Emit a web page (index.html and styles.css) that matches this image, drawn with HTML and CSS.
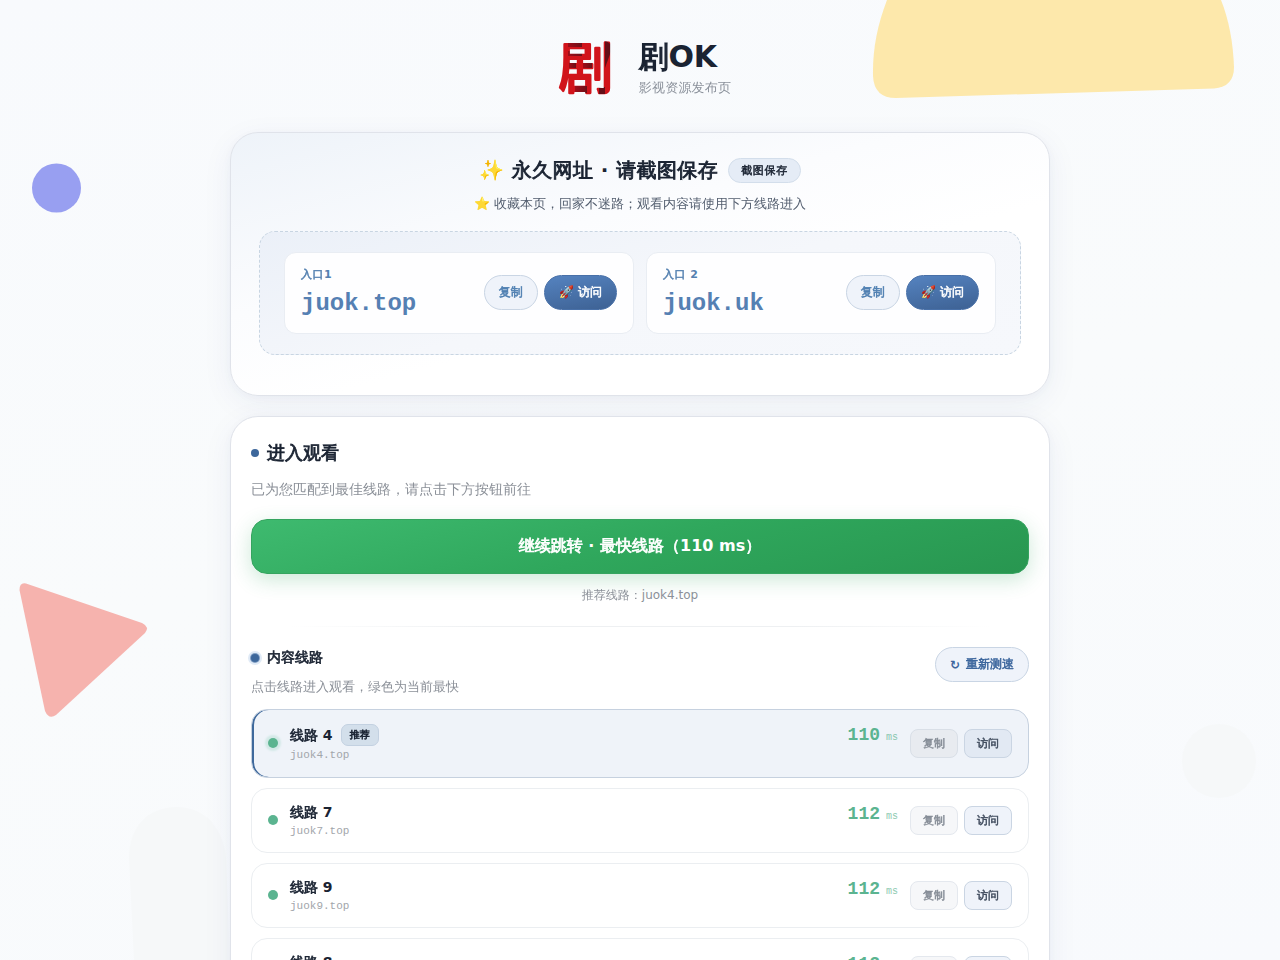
FILE: index.html
```html
<!DOCTYPE html>
<html lang="zh-CN">
<head>
<meta charset="utf-8">
<title>剧OK</title>
<link rel="stylesheet" href="styles.css">
</head>
<body>
<svg class="shapes" viewBox="0 0 1280 960" aria-hidden="true">
  <path fill="#fde8ab" d="M887 0C877 26 872.500 50 873 76Q874 98 896 98L1214 88.500Q1234 87 1234 67C1233 42 1229 20 1221 0Z"/>
  <circle cx="56.500" cy="188" r="24.500" fill="#989ff1"/>
  <path fill="#f6b3ae" d="M26 583.500L142 623Q150 627 145 633L56 715Q49 720 45 711L19.500 590Q19.500 582 26 583.500Z"/>
  <path fill="#f6f8f9" d="M134 960L129 858C129 828 147 807 177 807C207 807 224 832 226 858L230 960Z"/>
  <circle cx="1219" cy="761" r="37" fill="#f6f8f9"/>
</svg>
<main class="page">
  <header class="brand">
    <svg class="logo" viewBox="0 0 72 72" aria-hidden="true">
      <defs>
        <linearGradient id="dark" x1="0" x2="1" y1="0" y2="0"><stop offset="0" stop-color="#a00d19"/><stop offset="1" stop-color="#6c1018"/></linearGradient>
        <pattern id="ink" width="72" height="72" patternUnits="userSpaceOnUse">
          <rect width="72" height="72" fill="#d1141b"/>
          <rect x="19" y="9" width="14" height="6" fill="url(#dark)"/>
          <rect x="19" y="19" width="14" height="5" fill="url(#dark)"/>
          <rect x="20" y="30" width="7" height="6" fill="url(#dark)"/>
          <rect x="34" y="30" width="9" height="6" fill="url(#dark)"/>
          <rect x="26" y="54" width="12" height="7" fill="url(#dark)"/>
          <path d="M56 8L64 14L56 36Z" fill="#650e17"/>
          <rect x="50" y="55" width="6" height="7" fill="#650e17"/>
        </pattern>
      </defs>
      <text class="logo-text" x="9.500" y="56">剧</text>
    </svg>
    <div>
      <h1 class="brand-name strong">剧<span class="latin">OK</span></h1>
      <p class="brand-sub">影视资源发布页</p>
    </div>
  </header>

  <section class="card hero">
    <div class="hero-head"><h2 class="hero-title strong">✨ 永久网址<span class="latin"> · </span>请截图保存</h2><span class="pill strong">截图保存</span></div>
    <p class="hero-sub">⭐ 收藏本页，回家不迷路；观看内容请使用下方线路进入</p>
    <div class="entries">
      <div class="entry">
        <div><div class="entry-label strong">入口<span class="latin">1</span></div><div class="entry-domain">juok.top</div></div>
        <div class="actions"><button class="btn strong">复制</button><button class="btn btn-primary strong">🚀 访问</button></div>
      </div>
      <div class="entry">
        <div><div class="entry-label strong">入口<span class="latin"> 2</span></div><div class="entry-domain">juok.uk</div></div>
        <div class="actions"><button class="btn strong">复制</button><button class="btn btn-primary strong">🚀 访问</button></div>
      </div>
    </div>
  </section>

  <section class="card watch">
    <h2 class="watch-title strong"><i class="mark"></i>进入观看</h2>
    <p class="watch-desc">已为您匹配到最佳线路，请点击下方按钮前往</p>
    <button class="go strong">继续跳转<span class="latin"> · </span>最快线路（<span class="latin">110 ms</span>）</button>
    <p class="recommend">推荐线路：juok4.top</p>
    <div class="divider"></div>
    <div class="lines-head">
      <div>
        <h3 class="lines-title strong"><i class="mark mark-glow"></i>内容线路</h3>
        <p class="lines-desc">点击线路进入观看，绿色为当前最快</p>
      </div>
      <button class="btn retest strong"><span class="latin">↻</span><span>重新测速</span></button>
    </div>
    <div class="lines">
      <div class="line best">
        <i class="status"></i>
        <div class="info"><div class="name strong">线路<span class="latin">&nbsp;4</span><span class="tag">推荐</span></div><div class="domain">juok4.top</div></div>
        <div class="latency">110<small>ms</small></div>
        <div class="actions"><button class="mini muted strong">复制</button><button class="mini strong">访问</button></div>
      </div>
      <div class="line">
        <i class="status"></i>
        <div class="info"><div class="name strong">线路<span class="latin">&nbsp;7</span></div><div class="domain">juok7.top</div></div>
        <div class="latency">112<small>ms</small></div>
        <div class="actions"><button class="mini muted strong">复制</button><button class="mini strong">访问</button></div>
      </div>
      <div class="line">
        <i class="status"></i>
        <div class="info"><div class="name strong">线路<span class="latin">&nbsp;9</span></div><div class="domain">juok9.top</div></div>
        <div class="latency">112<small>ms</small></div>
        <div class="actions"><button class="mini muted strong">复制</button><button class="mini strong">访问</button></div>
      </div>
      <div class="line">
        <i class="status"></i>
        <div class="info"><div class="name strong">线路<span class="latin">&nbsp;8</span></div><div class="domain">juok8.top</div></div>
        <div class="latency">112<small>ms</small></div>
        <div class="actions"><button class="mini muted strong">复制</button><button class="mini strong">访问</button></div>
      </div>
    </div>
  </section>
</main>
</body>
</html>
```
FILE: styles.css
```css
* { box-sizing: border-box; margin: 0; padding: 0; }
html { height: 960px; overflow: hidden; }
body {
  height: 960px;
  overflow: hidden;
  background: linear-gradient(165deg, #f8fafd 0%, #f9fbfc 50%, #f8fafd 100%);
  color: #1a2332;
  font-family: "DejaVu Sans", "WenQuanYi Zen Hei", "Droid Sans Fallback", "Noto Sans CJK SC", sans-serif;
}
button { font-family: inherit; }
/* The CJK face has no bold cut, so its strokes are thickened here. */
.strong { font-weight: 700; -webkit-text-stroke: 0.045em currentColor; }
.latin { -webkit-text-stroke: 0; white-space: pre; }
.shapes { position: absolute; inset: 0; width: 1280px; height: 960px; }
.page { position: relative; width: 820px; margin: 0 auto; padding-top: 32px; }

.brand { display: flex; justify-content: center; align-items: center; gap: 18px; height: 72px; margin-bottom: 28px; }
.logo { width: 72px; height: 72px; overflow: visible; }
.logo-text {
  font-family: "Noto Sans CJK SC", sans-serif;
  font-size: 55px;
  font-weight: 400;
  fill: url(#ink);
  stroke: url(#ink);
  stroke-width: 2.6px;
  stroke-linejoin: round;
}
.brand-name { padding-top: 1px; font-size: 30px; line-height: 36px; letter-spacing: -0.3px; }
.brand-sub { margin-top: 3px; color: #8b919b; font-size: 13px; line-height: 20px; letter-spacing: 0.2px; }

.card {
  border: 1px solid #e0e3ea;
  border-radius: 28px;
  background: #fff;
  box-shadow: 0 8px 32px rgba(40, 50, 120, 0.06), 0 2px 8px rgba(40, 50, 120, 0.03);
}
.hero {
  height: 264px;
  padding: 23px 28px;
  background: linear-gradient(165deg, #eef3f9 0%, #fbfcfe 38%, #fff 60%);
}
.hero-head { display: flex; justify-content: center; align-items: center; gap: 10px; height: 28px; }
.hero-title { font-size: 20px; line-height: 28px; letter-spacing: 0.4px; }
.pill {
  height: 25px;
  padding: 0 12px;
  border: 1px solid #d3deeb;
  border-radius: 13px;
  background: #e5ecf6;
  font-size: 11px;
  line-height: 23px;
  letter-spacing: 0.7px;
}
.hero-sub { margin-top: 9px; color: #525d6e; font-size: 13px; line-height: 21px; text-align: center; }
.entries {
  display: grid;
  grid-template-columns: 1fr 1fr;
  gap: 12px;
  margin-top: 17px;
  padding: 20px 24px;
  border: 1px dashed #c8d5e2;
  border-radius: 16px;
  background: linear-gradient(165deg, #ebf0f8 0%, #f5f7fb 50%, #f6f8fc 100%);
}
.entry {
  display: flex;
  justify-content: space-between;
  align-items: center;
  height: 82px;
  padding: 0 16px 1px;
  border: 1px solid #e9edf3;
  border-radius: 12px;
  background: #fefeff;
}
.entry-label { color: #5480b0; font-size: 11px; line-height: 16px; letter-spacing: 0.5px; }
.entry-domain { margin-top: 5px; color: #5580b3; font-family: "Liberation Mono", monospace; font-size: 24px; font-weight: 700; line-height: 31px; }
.actions { display: flex; gap: 6px; }
.btn {
  height: 35px;
  padding: 0 14px;
  border: 1px solid #c9d5e4;
  border-radius: 18px;
  background: #eff3fa;
  color: #5080b2;
  font-size: 12px;
  white-space: nowrap;
}
.btn-primary { border-color: #4870a8; background: linear-gradient(170deg, #5583c0, #3d6193); color: #fff; }

.watch { height: 700px; margin-top: 20px; padding: 20px; }
.watch-title { display: flex; align-items: center; gap: 8px; font-size: 18px; line-height: 32px; }
.mark { width: 8px; height: 8px; border-radius: 50%; background: #3d679b; }
.mark-glow { box-shadow: 0 0 0 1px #7f9dc2, 0 0 0 3px #e0eaf6; }
.watch-desc { margin-top: 9px; color: #8b9098; font-size: 14px; line-height: 22px; }
.go {
  display: block;
  width: 100%;
  height: 55px;
  margin-top: 19px;
  border: 1px solid #35a45f;
  border-radius: 16px;
  background: linear-gradient(165deg, #3eba6f 0%, #2fa75c 50%, #289650 100%);
  box-shadow: 0 6px 20px rgba(45, 165, 90, 0.24);
  color: #fff;
  font-size: 16px;
}
.recommend { margin-top: 11px; color: #8b9098; font-size: 12px; line-height: 20px; text-align: center; }
.divider { height: 1px; margin-top: 21px; background: linear-gradient(90deg, transparent 5%, #eef0f2 30%, #eef0f2 70%, transparent 95%); }
.lines-head { display: flex; justify-content: space-between; align-items: flex-start; margin-top: 20px; }
.lines-title { display: flex; align-items: center; gap: 8px; font-size: 14px; line-height: 21px; }
.lines-desc { margin-top: 9px; color: #8b9098; font-size: 13px; line-height: 20px; }
.retest { display: flex; align-items: center; gap: 6px; color: #3c669d; }
.lines { display: grid; gap: 10px; margin-top: 12px; }
.line {
  display: flex;
  align-items: center;
  height: 65px;
  padding: 0 16px 1px;
  border: 1px solid #ebeef1;
  border-radius: 16px;
  background: #fff;
}
.best { height: 69px; border-color: #c6d1df; box-shadow: inset 2px 0 0 #3f699c; background: #eff3f9; }
.status { width: 10px; height: 10px; margin-right: 12px; border-radius: 50%; background: #5bb490; }
.best .status { box-shadow: 0 0 2px 3px #d3e9e7; }
.info { flex: 1; }
.name { display: flex; align-items: center; font-size: 14px; line-height: 20px; }
.tag {
  height: 22px;
  margin-left: 8px;
  padding: 0 8px;
  border: 1px solid #c3d1e1;
  border-radius: 7px;
  background: #d3dfeb;
  font-size: 10px;
  line-height: 20px;
}
.domain { padding-top: 1px; color: #a2a6ab; font-family: "Liberation Mono", monospace; font-size: 11px; line-height: 16px; }
.best .info { padding-top: 1px; }
.best .name { height: 21px; }
.latency { margin: -9px 12px 0 0; color: #5bb490; font-family: "Liberation Mono", monospace; font-size: 18px; font-weight: 700; line-height: 24px; }
.best .latency { margin-top: -13px; }
.latency small { margin-left: 6px; font-size: 10px; font-weight: 400; opacity: 0.7; }
.mini {
  width: 48px;
  height: 29px;
  border: 1px solid #cad5e3;
  border-radius: 8px;
  background: #eff3fa;
  color: #404c5e;
  font-size: 11px;
}
.best .mini { background: #e2e9f3; }
.mini.muted { border-color: #e4e8ee; background: #f6f7f9; color: #858c96; }
.best .mini.muted { border-color: #d9dfe7; background: #e8ebf0; }
```
